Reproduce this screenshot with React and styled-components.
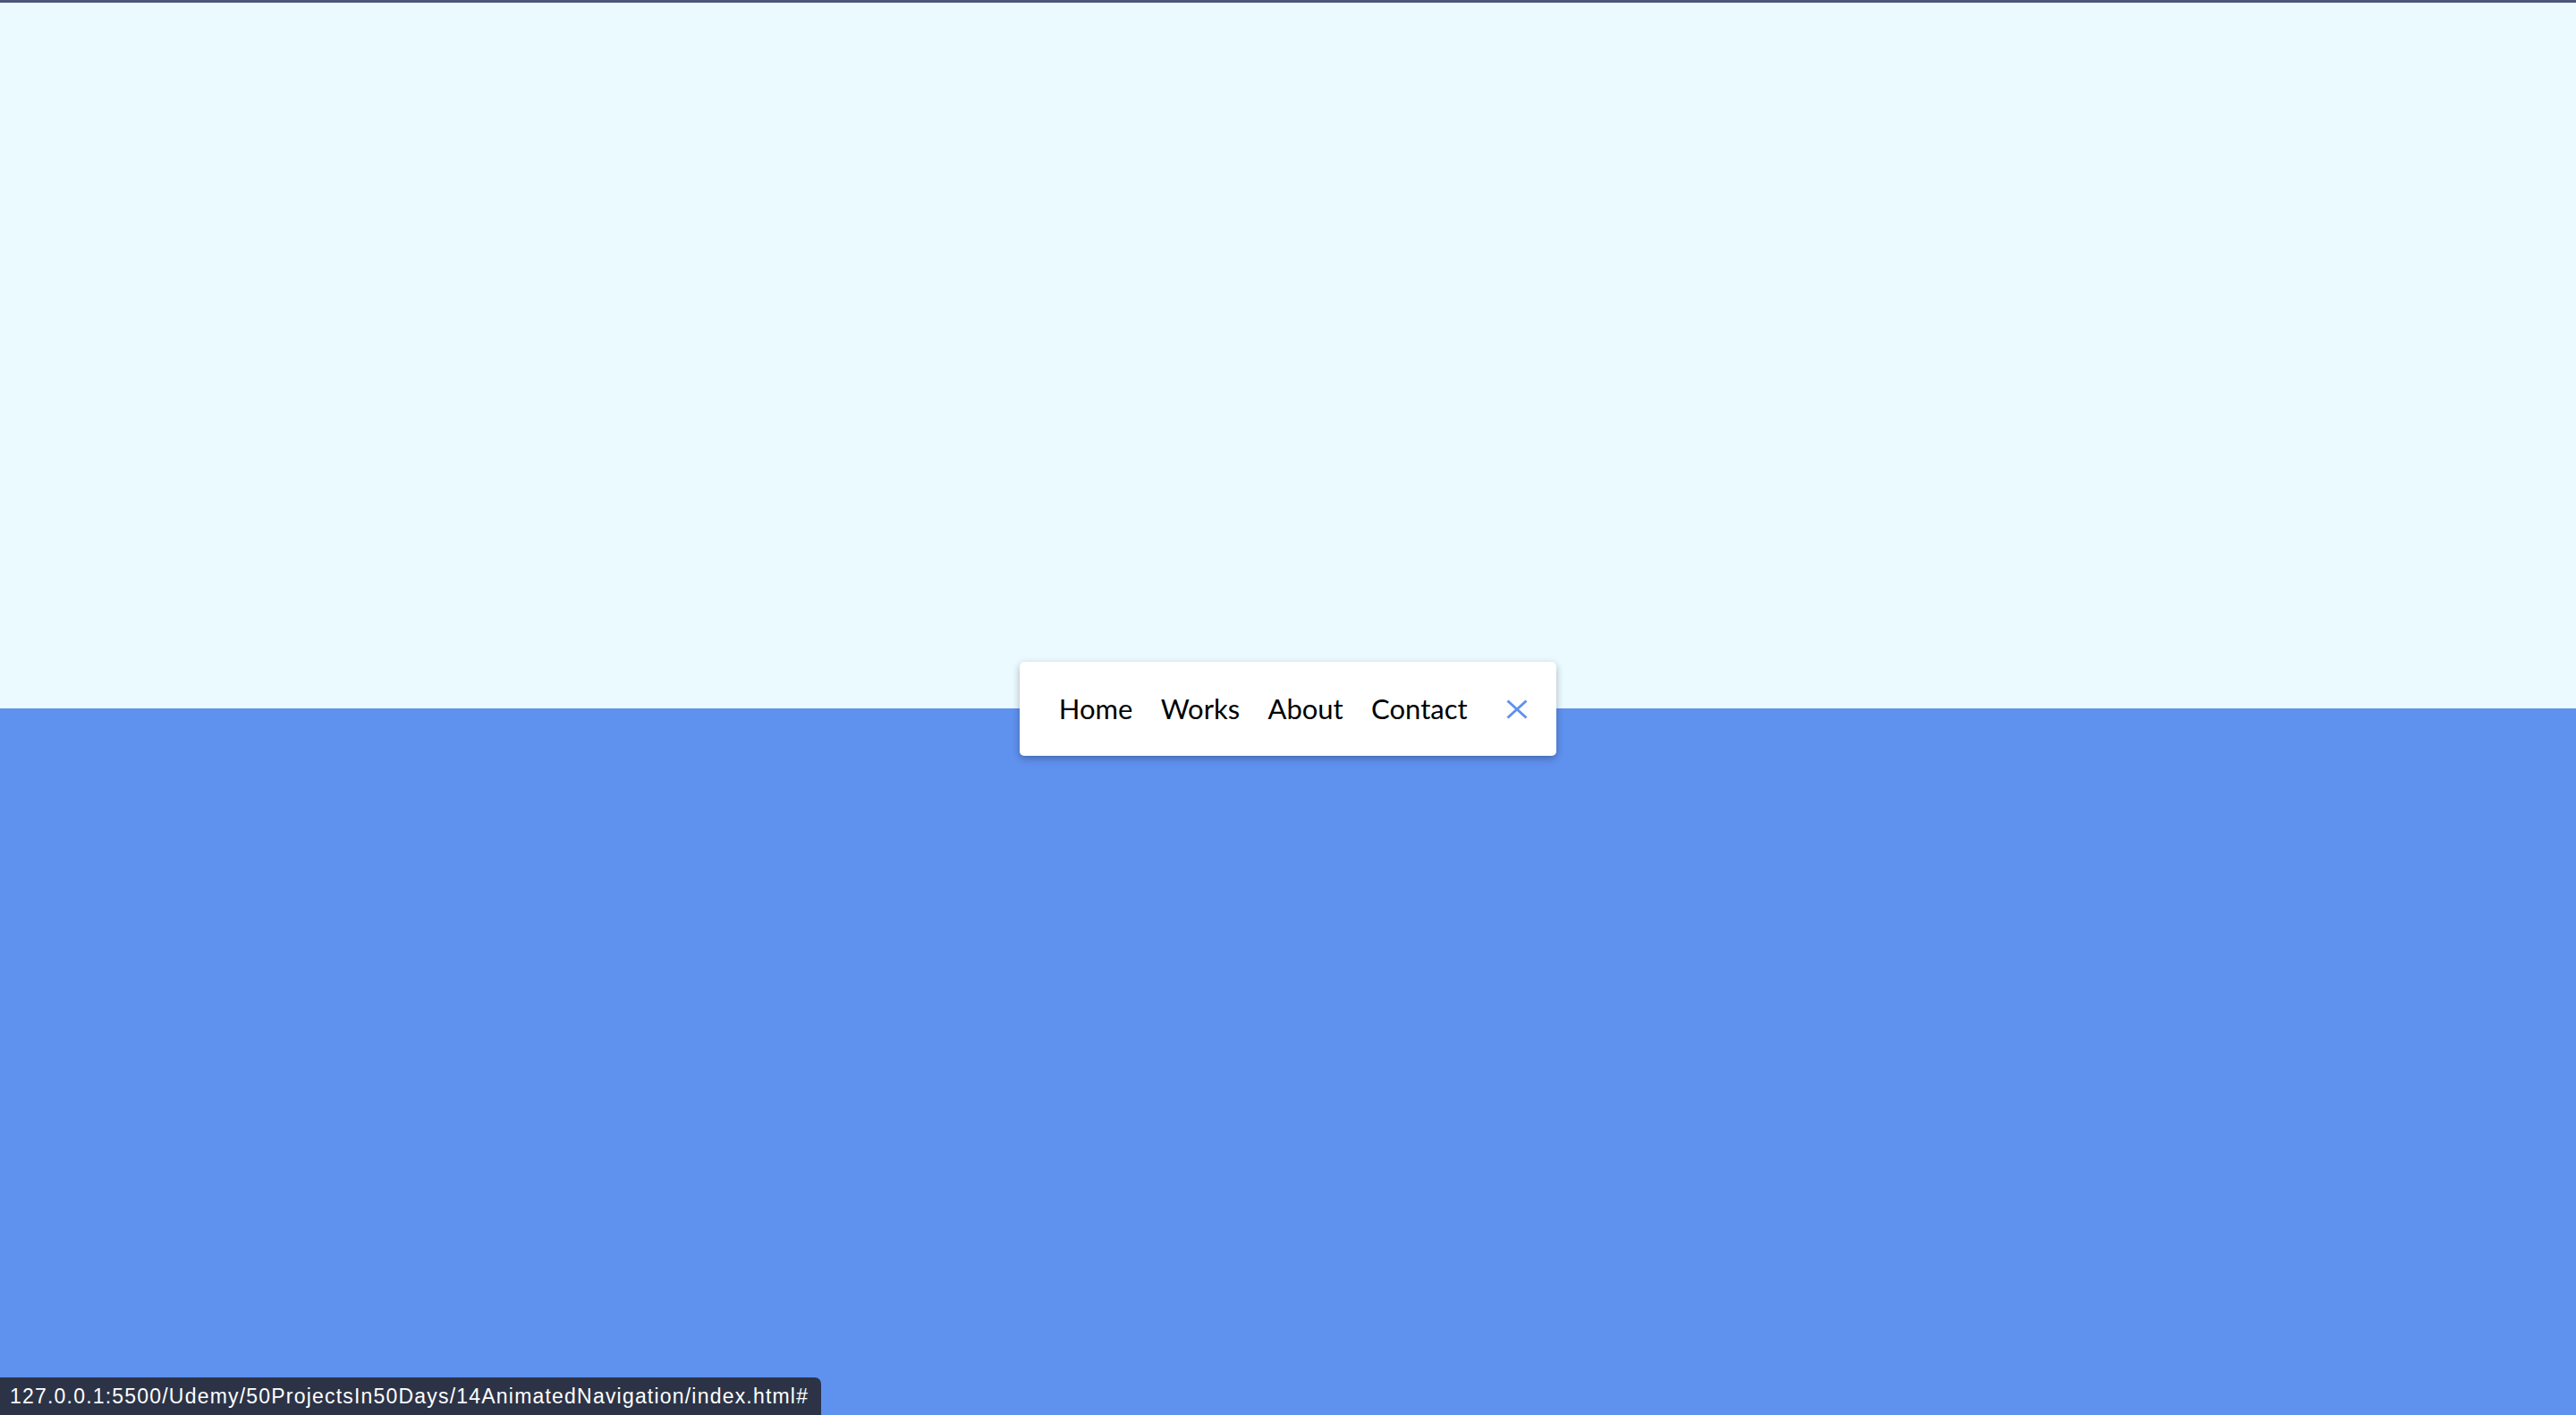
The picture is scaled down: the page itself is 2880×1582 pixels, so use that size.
import React from "react";
import styled, { createGlobalStyle } from "styled-components";

const GlobalStyle = createGlobalStyle`
  * {
    box-sizing: border-box;
  }
  html, body {
    margin: 0;
    padding: 0;
  }
  body {
    font-family: Lato, "Open Sans", sans-serif;
  }
`;

const Page = styled.div`
  height: 100vh;
  display: flex;
  flex-direction: column;
  overflow: hidden;
`;

const TopEdge = styled.div`
  height: 3px;
  background: #4d5677;
  flex-shrink: 0;
`;

const Stage = styled.main`
  flex: 1;
  display: flex;
  align-items: center;
  justify-content: center;
  background-image: linear-gradient(
    to bottom,
    #ebfaff 0%,
    #ebfaff 50%,
    #5f91ef 50%,
    #5f91ef 100%
  );
`;

const Nav = styled.nav`
  width: 600px;
  height: 105px;
  background: #fff;
  border-radius: 5px;
  box-shadow: 0 3px 9px rgba(0, 0, 0, 0.28);
  display: flex;
  align-items: center;
  padding: 0 20px 0 28px;
`;

const Links = styled.ul`
  display: flex;
  list-style: none;
  margin: 0;
  padding: 0;
`;

const Link = styled.a`
  display: block;
  margin: 0 15.7px;
  color: #000;
  text-decoration: none;
  font-size: 31px;
  line-height: 1;
`;

const Toggle = styled.button`
  margin-left: auto;
  width: 48px;
  height: 48px;
  padding: 0;
  border: 0;
  background: #fff;
  display: flex;
  align-items: center;
  justify-content: center;
  cursor: pointer;
`;

const StatusBar = styled.div`
  position: fixed;
  left: 0;
  bottom: 0;
  height: 42px;
  width: 918px;
  padding: 0 0 0 11px;
  display: flex;
  align-items: center;
  background: #2c3347;
  color: #fff;
  border-top-right-radius: 7px;
  font-family: "Liberation Sans", Arial, sans-serif;
  font-size: 23px;
  letter-spacing: 1.2px;
  white-space: nowrap;
`;

const CloseIcon = () => (
  <svg width="24" height="22" viewBox="0 0 24 22">
    <path
      d="M1.5 1.5 L22.5 20.5 M22.5 1.5 L1.5 20.5"
      stroke="#5f91ef"
      strokeWidth="3"
      fill="none"
    />
  </svg>
);

const items = ["Home", "Works", "About", "Contact"];

const App = () => {
  return (
    <>
      <GlobalStyle />
      <Page>
        <TopEdge />
        <Stage>
          <Nav>
            <Links>
              {items.map((item) => (
                <li key={item}>
                  <Link href="#">{item}</Link>
                </li>
              ))}
            </Links>
            <Toggle aria-label="close">
              <CloseIcon />
            </Toggle>
          </Nav>
        </Stage>
      </Page>
      <StatusBar>127.0.0.1:5500/Udemy/50ProjectsIn50Days/14AnimatedNavigation/index.html#</StatusBar>
    </>
  );
};

export default App;
